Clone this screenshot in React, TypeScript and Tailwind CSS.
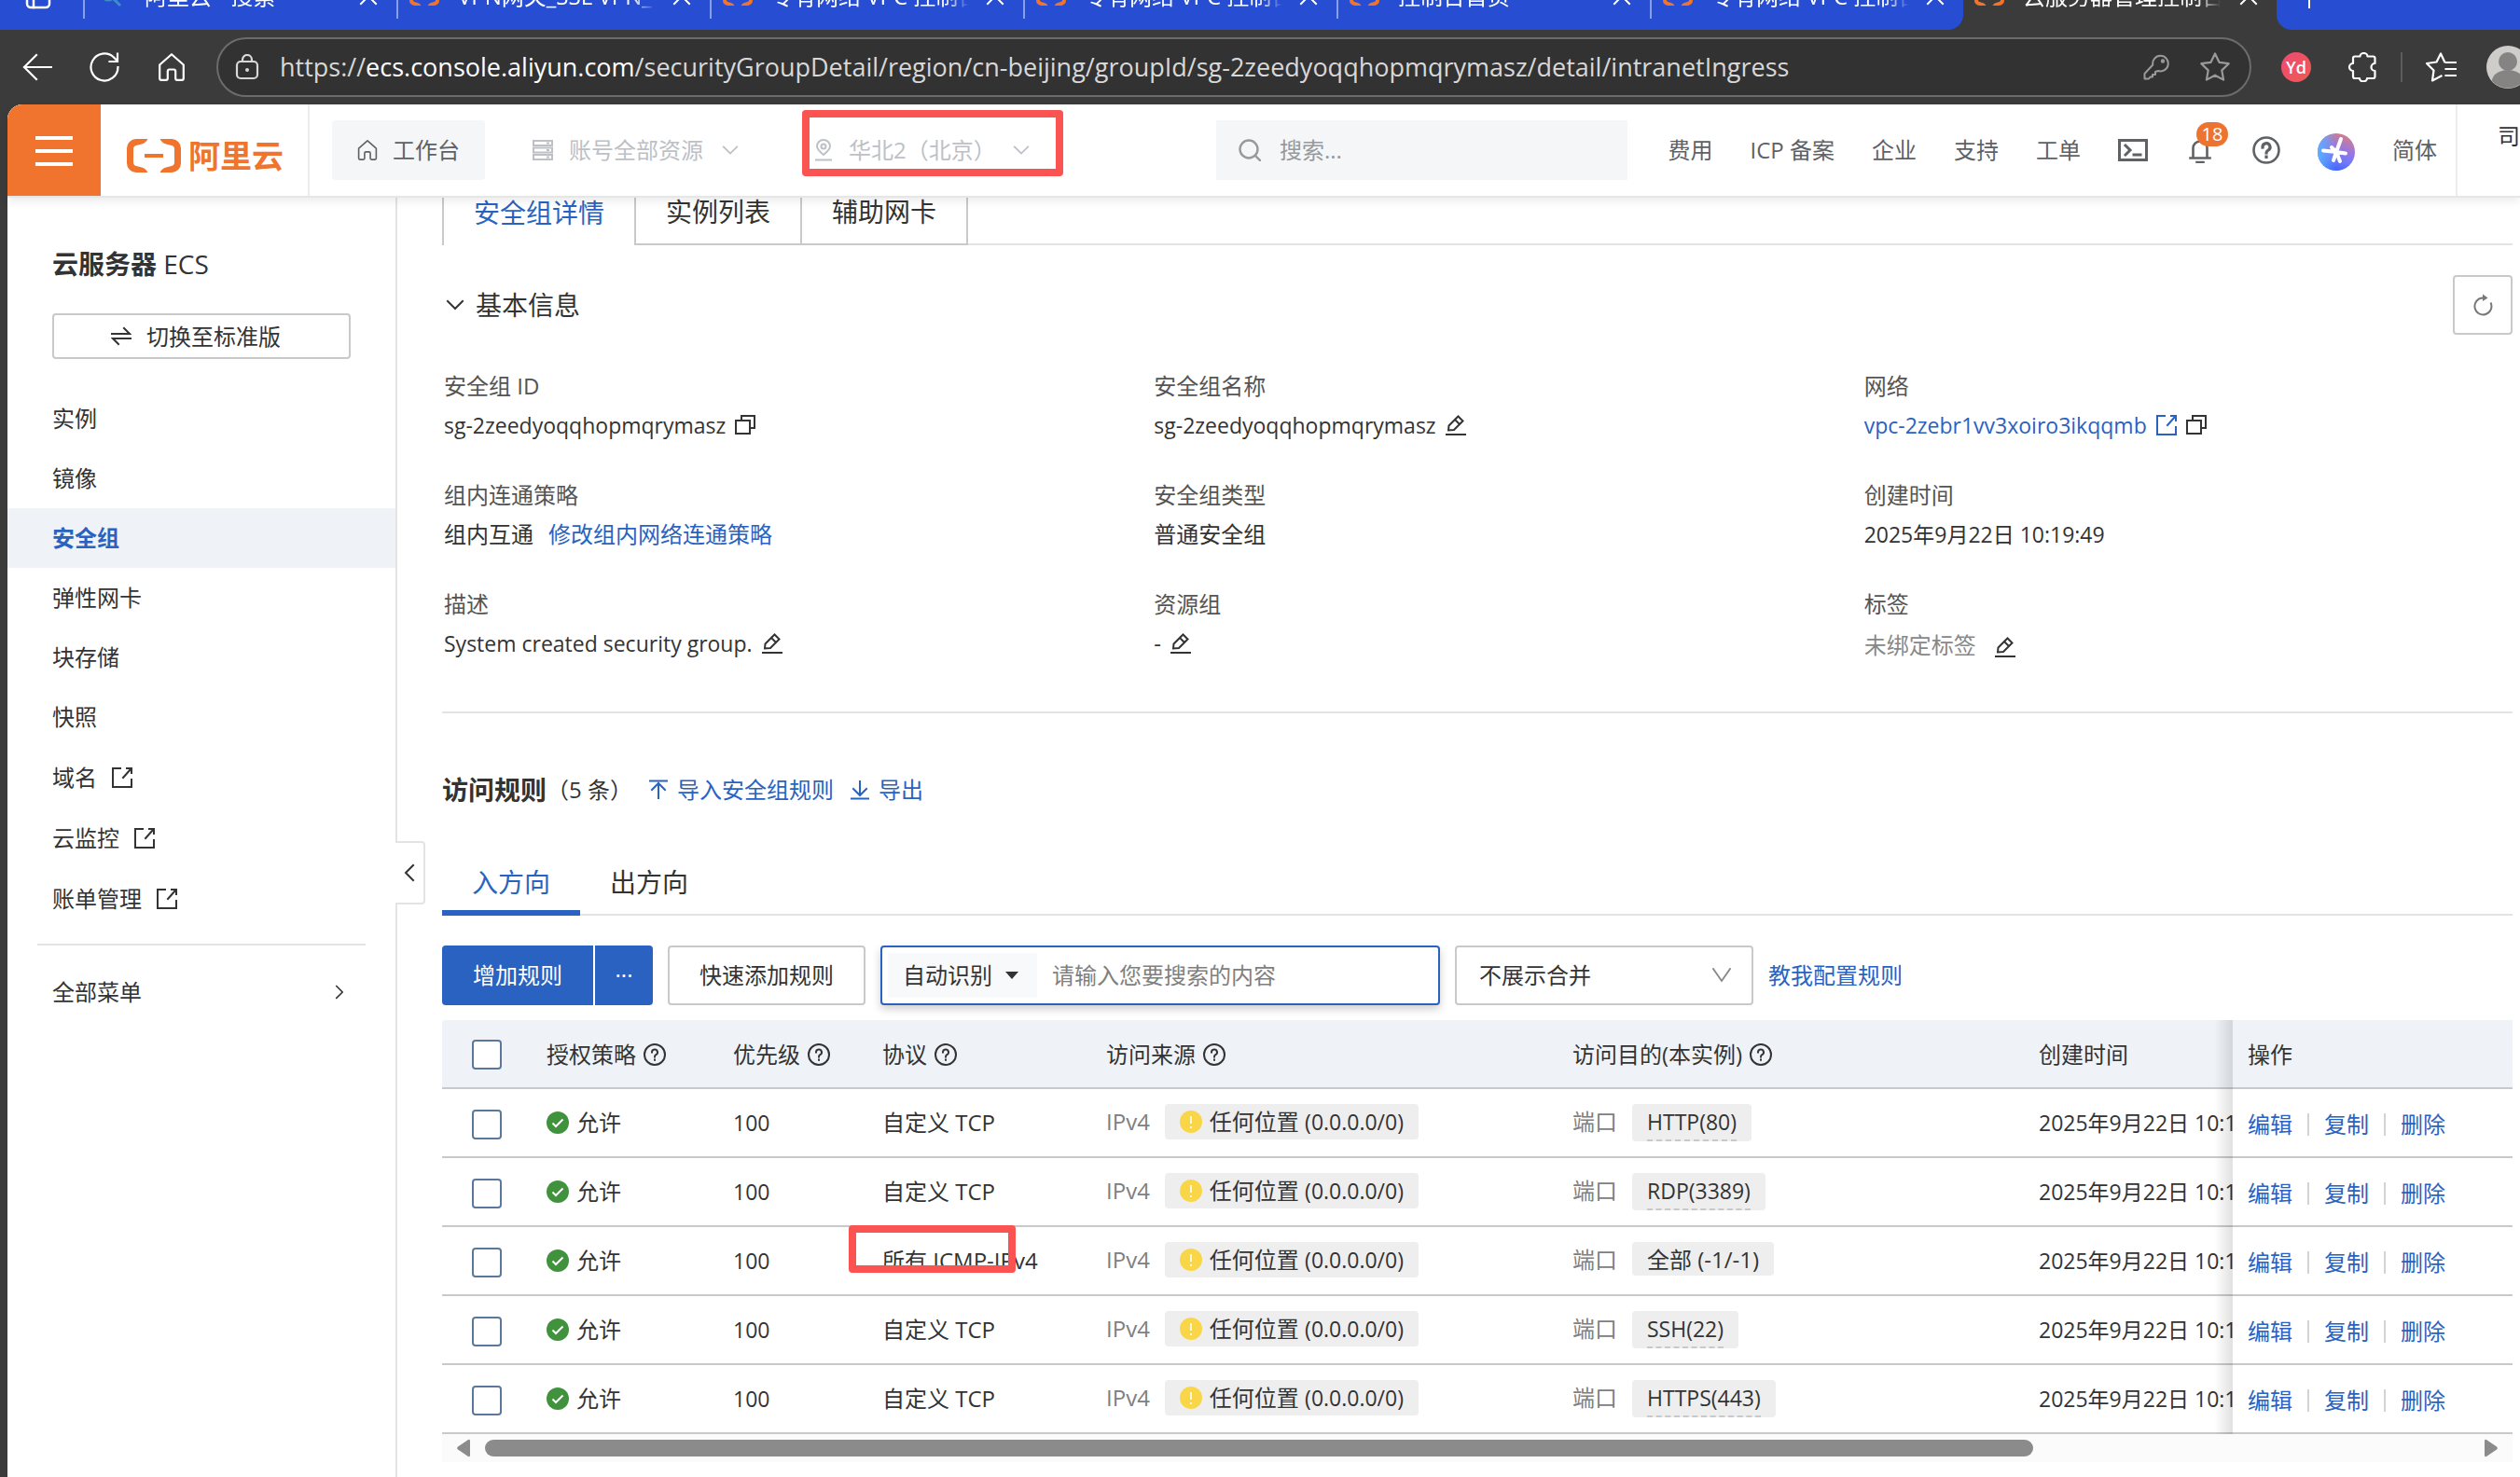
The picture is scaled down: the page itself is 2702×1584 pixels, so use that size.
import React from "react";

type IconProps = { className?: string };

const stroke = {
  fill: "none",
  stroke: "currentColor",
  strokeLinecap: "square" as const,
  strokeLinejoin: "miter" as const,
};

function Chevron({ className = "" }: IconProps) {
  return (
    <svg className={className} viewBox="0 0 20 12" {...stroke} strokeWidth={2}>
      <path d="M2 2l8 8 8-8" />
    </svg>
  );
}

function CopyIcon() {
  return (
    <svg className="size-[22px] shrink-0" viewBox="0 0 22 22" {...stroke} strokeWidth={2}>
      <path d="M1 6h15v14H1zM7 5V1h14v13h-4" />
    </svg>
  );
}

function EditIcon() {
  return (
    <svg className="size-[22px] shrink-0" viewBox="0 0 22 22" {...stroke} strokeWidth={2}>
      <path d="M1 21h20M3 16.500l.5-5L13.500 1.500l5 5-9.500 9.500zM10 5l5 5" />
    </svg>
  );
}

function ExternalIcon() {
  return (
    <svg className="size-[22px] shrink-0" viewBox="0 0 22 22" {...stroke} strokeWidth={2}>
      <path d="M9 1H1v20h20v-8M16 1h5v5M20 2l-8 9" />
    </svg>
  );
}

function HelpIcon({ className = "size-6" }: IconProps) {
  return (
    <svg className={className} viewBox="0 0 24 24" {...stroke} strokeWidth={2}>
      <circle cx="12" cy="12" r="11" />
      <path d="M9 9.500a3 3 0 1 1 4.300 2.700c-.9.500-1.300 1-1.300 2.300M12 17.600v.1" />
    </svg>
  );
}

function HomeIcon({ className = "" }: IconProps) {
  return (
    <svg className={className} viewBox="0 0 28 30" {...stroke} strokeWidth={2.2} strokeLinejoin="round">
      <path d="M1.200 12.500L14 1.200l12.800 11.300V27a1.800 1.800 0 0 1-1.800 1.800h-5a1.800 1.800 0 0 1-1.800-1.800v-7.500a2 2 0 0 0-2-2h-4.400a2 2 0 0 0-2 2V27A1.800 1.800 0 0 1 8 28.800H3A1.800 1.800 0 0 1 1.200 27z" />
    </svg>
  );
}

function AliyunMark({ className = "" }: IconProps) {
  return (
    <svg className={className} viewBox="0 0 58 36" fill="#f0742d">
      <path d="M22 0H10A10 10 0 0 0 0 10v16a10 10 0 0 0 10 10h12.500c-1.500-3-3.500-4.500-6.500-5.500l-6-1.500a4 4 0 0 1-3-4v-14a4 4 0 0 1 3-4l6-1.500c3-1 5-2.500 6.500-5.500zM36 0h12a10 10 0 0 1 10 10v16a10 10 0 0 1-10 10H35.500c1.500-3 3.500-4.500 6.500-5.500l6-1.500a4 4 0 0 0 3-4v-14a4 4 0 0 0-3-4l-6-1.500c-3-1-5-2.500-6.500-5.500z" />
      <path d="M19 16h20v4H19z" />
    </svg>
  );
}

function CloseIcon() {
  return (
    <svg className="size-5 shrink-0" viewBox="0 0 20 20" {...stroke} strokeWidth={2}>
      <path d="M2 2l16 16M18 2L2 18" />
    </svg>
  );
}

const browserTabs = [
  { title: "阿里云 - 搜索", search: true },
  { title: "VPN网关_SSL VPN_专有网络" },
  { title: "专有网络 VPC 控制台" },
  { title: "专有网络 VPC 控制台" },
  { title: "控制台首页" },
  { title: "专有网络 VPC 控制台" },
  { title: "云服务器管理控制台", active: true },
];

function BrowserTabs() {
  return (
    <div className="flex h-8 items-end overflow-hidden bg-[#3b3b3b] text-2xl text-white">
      <div className="flex h-[72px] w-[89px] shrink-0 items-center justify-center bg-[#264dd2] pr-2">
        <svg className="size-7" viewBox="0 0 28 28" {...stroke} strokeWidth={2.5}>
          <rect x="2" y="2" width="24" height="24" rx="4" />
          <path d="M9 8v18M2 9h24" />
        </svg>
      </div>
      {browserTabs.map((tab, i) => (
        <div
          key={i}
          className={`flex h-[72px] w-[336px] shrink-0 items-center pr-5 ${
            tab.active
              ? "bg-[#3b3b3b]"
              : i === 5
                ? "rounded-br-2xl bg-[#264dd2]"
                : "bg-[#264dd2]"
          }`}
        >
          {!tab.active && <span className="-mt-1 h-[52px] w-0.5 shrink-0 bg-[#8ba0e8]" />}
          <span className="ml-3 flex w-8 shrink-0 justify-center">
            {tab.search ? (
              <svg className="size-6" viewBox="0 0 24 24" fill="none" stroke="#3c8fc4" strokeWidth={3}>
                <circle cx="9" cy="9" r="7" />
                <path d="M14 14l8 8" />
              </svg>
            ) : (
              <AliyunMark className="h-5 w-8" />
            )}
          </span>
          <span className="ml-5 w-[212px] shrink-0 overflow-hidden whitespace-nowrap [mask-image:linear-gradient(to_right,black_88%,transparent)]">
            {tab.title}
          </span>
          <button aria-label="关闭标签页" className="ml-auto">
            <CloseIcon />
          </button>
        </div>
      ))}
      <div className="flex h-[72px] grow items-center rounded-bl-2xl bg-[#264dd2] pl-[22px]">
        <button aria-label="新建标签页">
          <svg className="size-[26px]" viewBox="0 0 26 26" {...stroke} strokeWidth={2}>
            <path d="M13 1v24M1 13h24" />
          </svg>
        </button>
      </div>
    </div>
  );
}

function BrowserToolbar() {
  return (
    <div className="flex h-20 items-center overflow-hidden bg-[#3b3b3b] pl-6 text-white">
      <button aria-label="后退">
        <svg className="size-8" viewBox="0 0 32 32" {...stroke} strokeWidth={2.2}>
          <path d="M2 16h29M15 3L2 16l13 13" />
        </svg>
      </button>
      <button aria-label="刷新" className="ml-10">
        <svg className="size-8" viewBox="0 0 32 32" {...stroke} strokeWidth={2.2}>
          <path d="M30.500 16A14.500 14.500 0 1 1 26 5.500l3 3M30 1.500V10h-8.500" />
        </svg>
      </button>
      <button aria-label="主页" className="ml-[42px]">
        <HomeIcon className="h-[30px] w-7" />
      </button>
      <div className="ml-[34px] flex h-16 min-w-0 grow items-center rounded-full border-2 border-[#6c6c6c] bg-[#323232] pl-[18px] pr-5 text-[#d8d8d8]">
        <svg className="h-7 w-[26px] shrink-0" viewBox="0 0 26 28" {...stroke} strokeWidth={2.2}>
          <rect x="2" y="8" width="22" height="18" rx="4" />
          <path d="M8 8V6a5 5 0 0 1 10 0v2" />
          <circle cx="13" cy="17" r="2" fill="currentColor" stroke="none" />
        </svg>
        <div className="ml-[22px] grow overflow-hidden whitespace-nowrap text-[27px] leading-10">
          https://<span className="text-white">ecs.console.aliyun.com</span>
          /securityGroupDetail/region/cn-beijing/groupId/sg-2zeedyoqqhopmqrymasz/detail/intranetIngress
        </div>
        <svg className="size-7 shrink-0 text-[#9a9a9a]" viewBox="0 0 28 28" {...stroke} strokeWidth={2}>
          <path d="M10.300 11.500A8.300 8.300 0 1 1 16 18l-3 1v3h-3v2.500H7.500L6 26.500H1.500V21z" strokeLinejoin="round" />
          <circle cx="21" cy="7.500" r="1.200" />
        </svg>
        <svg className="ml-8 size-[34px] shrink-0 text-[#9a9a9a]" viewBox="0 0 34 34" {...stroke} strokeWidth={2.200}>
          <path d="M17 2.500l4.500 9.300 10.200 1.400-7.400 7.200 1.800 10.200L17 25.700 7.900 30.600l1.800-10.200-7.400-7.200 10.200-1.400z" strokeLinejoin="round" />
        </svg>
      </div>
      <span className="ml-8 flex size-8 shrink-0 items-center justify-center rounded-full bg-gradient-to-br from-[#ee4a72] to-[#ee5a50] text-lg font-semibold">
        Yd
      </span>
      <svg className="ml-10 size-8 shrink-0" viewBox="0 0 32 32" {...stroke} strokeWidth={2.200} strokeLinejoin="round">
        <path d="M12.500 4.500a4 3.500 0 0 1 8 0h6a2 2 0 0 1 2 2V12a4 4 0 0 0 0 8v6a2 2 0 0 1-2 2H20a4 3.300 0 0 1-8 0H7a2 2 0 0 1-2-2v-6a4 4 0 0 1 0-8V6.500a2 2 0 0 1 2-2z" />
      </svg>
      <span className="ml-6 h-8 w-0.5 shrink-0 bg-[#5c5c5c]" />
      <svg className="ml-6 size-[34px] shrink-0" viewBox="0 0 34 34" {...stroke} strokeWidth={2.200} strokeLinejoin="round">
        <path d="M21 11L17 2.500 12.500 11.500 2 13l7.500 7.500L8 31.500l9.500-5M22.500 12h10.500M22.500 19h10.500M22.500 26h10.500" />
      </svg>
      <svg className="-mr-[10px] ml-8 size-[46px] shrink-0" viewBox="0 0 46 46">
        <circle cx="23" cy="23" r="23" fill="#cfcdca" />
        <circle cx="23" cy="17" r="10" fill="#858482" />
        <path d="M6 38a17 12 0 0 1 34 0 23 23 0 0 1-34 0z" fill="#858482" />
      </svg>
    </div>
  );
}

function ConsoleHeader() {
  return (
    <header className="relative z-10 flex h-[100px] shrink-0 items-stretch overflow-hidden rounded-tl-2xl border-b-2 border-[#e6e6e6] bg-white text-2xl text-[#5f6165] shadow-[0_4px_10px_rgba(0,0,0,0.08)]">
      <button aria-label="菜单" className="-mb-0.5 flex w-[100px] shrink-0 flex-col items-center justify-center gap-2.5 bg-[#f0742d]">
        <span className="h-1 w-10 bg-white" />
        <span className="h-1 w-10 bg-white" />
        <span className="h-1 w-10 bg-white" />
      </button>
      <a href="#home" className="flex w-56 shrink-0 items-center border-r-2 border-[#ececec] pl-7 pt-3">
        <AliyunMark className="h-9 w-[58px]" />
        <span className="ml-2 text-[34px] leading-10 font-bold text-[#f0742d]">阿里云</span>
      </a>
      <div className="flex min-w-0 grow items-center">
        <button className="ml-6 flex h-16 w-[164px] shrink-0 items-center justify-center gap-4 rounded bg-[#f4f6f8]">
          <HomeIcon className="size-[22px]" />
          工作台
        </button>
        <button className="ml-[50px] flex shrink-0 items-center text-[#bdc0c5]">
          <svg className="size-6" viewBox="0 0 24 24" {...stroke} strokeWidth={2}>
            <path d="M2 2h20v5H2zM2 9.500h20v5H2zM2 17h20v5H2zM17 4.500h1M17 12h1M17 19.500h1" />
          </svg>
          <span className="ml-4">账号全部资源</span>
          <Chevron className="ml-5 h-3 w-[18px]" />
        </button>
        <div className="relative ml-20 w-[232px] shrink-0">
          <button className="flex w-full items-center text-[#bdc0c5]">
            <svg className="size-6" viewBox="0 0 24 24" {...stroke} strokeWidth={2}>
              <path d="M11 17c-5-4-7-6-7-9a7 7 0 0 1 14 0c0 3-2 5-7 9zM3 22.500h16" />
              <circle cx="11" cy="8" r="2.500" />
            </svg>
            <span className="ml-3.5">华北2（北京）</span>
            <Chevron className="ml-auto h-3 w-[18px]" />
          </button>
          <span className="pointer-events-none absolute -top-[27px] -left-[12px] h-[71px] w-[280px] rounded border-8 border-[#fb5252]" />
        </div>
        <label className="ml-[200px] flex h-16 min-w-0 grow items-center bg-[#f4f6f8] px-6 text-[#97999d]">
          <svg className="size-6 shrink-0" viewBox="0 0 24 24" {...stroke} strokeWidth={2.400}>
            <circle cx="11" cy="11" r="9.500" />
            <path d="M18 18l5 5" />
          </svg>
          <input type="text" aria-label="搜索" placeholder="搜索..." className="ml-5 min-w-0 grow bg-transparent outline-none placeholder:text-[#97999d]" />
        </label>
        <nav className="ml-11 flex shrink-0 items-center gap-10">
          <a href="#cost">费用</a>
          <a href="#icp">ICP 备案</a>
          <a href="#enterprise">企业</a>
          <a href="#support">支持</a>
          <a href="#ticket">工单</a>
        </nav>
        <svg className="ml-10 h-6 w-8 shrink-0" viewBox="0 0 32 24" {...stroke} strokeWidth={3}>
          <path d="M1.500 1.500h29v21h-29zM8 7l5 5-5 5M17 17h7" />
        </svg>
        <div className="relative ml-11 shrink-0">
          <svg className="h-7 w-6" viewBox="0 0 24 28" {...stroke} strokeWidth={2.600}>
            <path d="M1.500 22.500h21M4.500 22V12a7.500 7.500 0 0 1 15 0v10M12 1.500v2M8.500 27h7" />
          </svg>
          <span className="absolute -top-4 left-2 flex h-[26px] w-[34px] items-center justify-center rounded-full bg-[#ed7430] text-xl leading-none text-white">
            18
          </span>
        </div>
        <svg className="ml-11 size-[30px] shrink-0" viewBox="0 0 30 30" {...stroke} strokeWidth={2.600}>
          <circle cx="15" cy="15" r="13.500" />
          <path d="M11 12a4 4 0 1 1 6 3.200c-1.300.8-2 1.400-2 2.800M15 22v.5" strokeWidth={3.200} />
        </svg>
        <svg className="mt-1 ml-10 size-10 shrink-0" viewBox="0 0 40 40">
          <defs>
            <linearGradient id="spark" x1="0.8" y1="0" x2="0.4" y2="1">
              <stop offset="0" stopColor="#d9807c" />
              <stop offset="0.4" stopColor="#9d76dc" />
              <stop offset="0.7" stopColor="#6f78fa" />
              <stop offset="1" stopColor="#3a62fb" />
            </linearGradient>
            <linearGradient id="sparkEdge" x1="0" y1="0.5" x2="0.5" y2="0.5">
              <stop offset="0" stopColor="#5eb0ff" />
              <stop offset="1" stopColor="#5eb0ff" stopOpacity="0" />
            </linearGradient>
          </defs>
          <circle cx="20" cy="20" r="20" fill="url(#spark)" />
          <circle cx="20" cy="20" r="20" fill="url(#sparkEdge)" />
          <path d="M20 20l5-14M20 20l-5-5M20 20l-14-1.500M20 20l10 1.500M20 20l-3 9M20 20l4 10" stroke="#fff" strokeWidth="4" strokeLinecap="round" />
        </svg>
        <button className="mx-5 ml-10 shrink-0">简体</button>
      </div>
      <div className="w-[69px] shrink-0 overflow-hidden border-l-2 border-[#ececec] pt-[18px] pl-[43px] whitespace-nowrap text-[#333]">
        司
      </div>
    </header>
  );
}

const menu = ["实例", "镜像", "安全组", "弹性网卡", "块存储", "快照"];
const externalMenu = ["域名", "云监控", "账单管理"];

function Sidebar() {
  return (
    <aside className="relative w-[418px] shrink-0 border-r-2 border-[#e3e3e3] text-2xl text-[#333]">
      <h1 className="mt-[51px] pl-12 text-[28px] leading-10 font-bold">
        云服务器 <span className="font-normal">ECS</span>
      </h1>
      <button className="mx-12 mt-[33px] flex h-[49px] w-80 items-center justify-center gap-4 rounded border-2 border-[#c8c9cb] pr-3">
        <svg className="h-6 w-[22px]" viewBox="0 0 22 24" {...stroke} strokeWidth={2}>
          <path d="M1 9h19l-6-6M21 14H2l6 6" />
        </svg>
        切换至标准版
      </button>
      <nav className="mt-8 flex flex-col">
        {menu.map((m) => (
          <a
            key={m}
            href="#menu"
            className={`flex h-16 items-center pl-12 ${m === "安全组" ? "bg-[#eff3f8] font-bold text-[#2962c1]" : ""}`}
          >
            {m}
          </a>
        ))}
        {externalMenu.map((m) => (
          <a key={m} href="#external" className="flex h-[65px] items-center gap-4 pl-12">
            {m}
            <ExternalIcon />
          </a>
        ))}
      </nav>
      <hr className="mx-8 mt-4 border-t-2 border-[#e3e3e3]" />
      <button className="mt-[18px] flex h-16 w-full items-center justify-between pr-[52px] pl-12">
        全部菜单
        <Chevron className="h-2.5 w-4 -rotate-90" />
      </button>
      <button
        aria-label="收起导航"
        className="absolute top-[690px] -right-8 flex h-[68px] w-8 items-center justify-center rounded-r border-2 border-l-0 border-[#e3e3e3] bg-white"
      >
        <Chevron className="h-3 w-5 rotate-90" />
      </button>
    </aside>
  );
}

function Field({ label, children }: { label: string; children: React.ReactNode }) {
  return (
    <div className="leading-[42px]">
      <dt className="text-[#555]">{label}</dt>
      <dd className="flex h-[42px] items-center gap-2.5">{children}</dd>
    </div>
  );
}

function BasicInfo() {
  return (
    <section>
      <div className="mt-8 flex h-16 items-center justify-between">
        <h2 className="flex items-center gap-3 pl-1 text-[28px] leading-10">
          <Chevron className="h-3 w-5" />
          基本信息
        </h2>
        <button aria-label="刷新" className="flex size-16 items-center justify-center rounded border-2 border-[#c8c9cb] text-[#777]">
          <svg className="size-6" viewBox="0 0 24 24" {...stroke} strokeWidth={2} strokeLinecap="butt">
            <path d="M20.500 9.500A9 9 0 1 1 12 4.500" />
            <path d="M12 0.500l5.500 4-5.500 3.500z" fill="currentColor" stroke="none" />
          </svg>
        </button>
      </div>
      <dl className="mt-[34px] grid grid-cols-3 gap-x-[66px] gap-y-[33px] pl-0.5">
        <Field label="安全组 ID">
          <span className="text-[23px]">sg-2zeedyoqqhopmqrymasz</span>
          <CopyIcon />
        </Field>
        <Field label="安全组名称">
          <span className="text-[23px]">sg-2zeedyoqqhopmqrymasz</span>
          <EditIcon />
        </Field>
        <Field label="网络">
          <a href="#vpc" className="flex items-center gap-2.5 text-[23px] text-[#2962c1]">
            vpc-2zebr1vv3xoiro3ikqqmb
            <ExternalIcon />
          </a>
          <CopyIcon />
        </Field>
        <Field label="组内连通策略">
          组内互通
          <a href="#policy" className="ml-1.5 text-[#2962c1]">
            修改组内网络连通策略
          </a>
        </Field>
        <Field label="安全组类型">普通安全组</Field>
        <Field label="创建时间">
          <span className="text-[23px]">2025年9月22日 10:19:49</span>
        </Field>
        <Field label="描述">
          <span className="text-[23px]">System created security group.</span>
          <EditIcon />
        </Field>
        <Field label="资源组">
          -
          <EditIcon />
        </Field>
        <Field label="标签">
          <span className="mr-2.5 pt-1 text-[#888]">未绑定标签</span>
          <span className="pt-2">
            <EditIcon />
          </span>
        </Field>
      </dl>
    </section>
  );
}

const rules = [
  { id: 1, protocol: "自定义 TCP", port: "HTTP(80)" },
  { id: 2, protocol: "自定义 TCP", port: "RDP(3389)" },
  { id: 3, protocol: "所有 ICMP-IPv4", port: "全部 (-1/-1)", marked: true },
  { id: 4, protocol: "自定义 TCP", port: "SSH(22)" },
  { id: 5, protocol: "自定义 TCP", port: "HTTPS(443)" },
];

const columns = [
  { name: "授权策略", help: true, width: "w-[200px]" },
  { name: "优先级", help: true, width: "w-[160px]" },
  { name: "协议", help: true, width: "w-[240px]" },
  { name: "访问来源", help: true, width: "" },
  { name: "访问目的(本实例)", help: true, width: "" },
  { name: "创建时间", help: false, width: "w-[224px]" },
];

const box =
  "block size-8 appearance-none rounded border-2 border-[#5b789c] bg-white checked:bg-[#2962c1]";
const pinned =
  "relative before:absolute before:top-0 before:-bottom-0.5 before:-left-5 before:w-5 before:bg-gradient-to-l before:from-black/12 before:to-transparent";

function RulesTable() {
  return (
    <table className="mt-4 w-full table-fixed border-separate border-spacing-0 text-left leading-[38px]">
      <thead className="bg-[#eff3f8]">
        <tr className="h-[74px] *:border-b-2 *:border-[#c8c9cb] *:pt-0.5">
          <th className="w-24 rounded-tl pl-8">
            <input type="checkbox" aria-label="全选" className={box} />
          </th>
          {columns.map((c) => (
            <th key={c.name} className={`pl-4 font-normal whitespace-nowrap ${c.width}`}>
              <span className="flex items-center gap-2">
                {c.name}
                {c.help && <HelpIcon />}
              </span>
            </th>
          ))}
          <th className={`w-[300px] bg-[#eff3f8] pl-4 font-normal ${pinned}`}>操作</th>
        </tr>
      </thead>
      <tbody>
        {rules.map((r) => (
          <tr key={r.id} className="h-[74px] *:border-b-2 *:border-[#c8c9cb]">
            <td className="pt-1 pl-8">
              <input type="checkbox" aria-label={`选择规则 ${r.port}`} className={box} />
            </td>
            <td className="pl-4">
              <span className="flex items-center gap-2">
                <svg className="size-6" viewBox="0 0 24 24">
                  <circle cx="12" cy="12" r="12" fill="#40933c" />
                  <path d="M6.500 12.500l3.500 3.500 7.500-7.500" fill="none" stroke="#fff" strokeWidth="2" />
                </svg>
                允许
              </span>
            </td>
            <td className="pl-4 text-[23px]">100</td>
            <td className="relative pl-4 whitespace-nowrap">
              {r.protocol}
              {r.marked && (
                <span className="pointer-events-none absolute -top-0.5 -left-5 h-[51px] w-[179px] rounded border-8 border-[#fb5252]" />
              )}
            </td>
            <td className="pl-4">
              <div className="flex h-10 items-start whitespace-nowrap">
                <span className="text-[#808080]">IPv4</span>
                <span className="ml-4 flex h-[38px] items-center gap-2 rounded bg-[#eee] px-4">
                  <svg className="size-6" viewBox="0 0 24 24">
                    <circle cx="12" cy="12" r="12" fill="#f9d648" />
                    <path d="M12 6v8M12 17v2" stroke="#fff" strokeWidth="1.600" />
                  </svg>
                  <span>
                    任何位置 <span className="text-[23px]">(0.0.0.0/0)</span>
                  </span>
                </span>
              </div>
            </td>
            <td className="pl-4">
              <div className="flex h-10 items-start whitespace-nowrap">
                <span className="text-[#808080]">端口</span>
                <span className="ml-4 rounded bg-[#eee] px-4">
                  <span
                    className={
                      r.marked ? "block h-9" : "block h-10 border-b-2 border-dashed border-[#c8c9cb] text-[23px]"
                    }
                  >
                    {r.port}
                  </span>
                </span>
              </div>
            </td>
            <td className="overflow-hidden pl-4 text-[23px] whitespace-nowrap">2025年9月22日 10:19:49</td>
            <td className={`bg-white pt-1 pl-4 text-[#2962c1] ${pinned}`}>
              <div className="flex items-center gap-4">
                <a href="#edit">编辑</a>
                <span className="h-6 w-0.5 bg-[#d3d3d3]" />
                <a href="#copy">复制</a>
                <span className="h-6 w-0.5 bg-[#d3d3d3]" />
                <a href="#delete">删除</a>
              </div>
            </td>
          </tr>
        ))}
      </tbody>
    </table>
  );
}

function AccessRules() {
  return (
    <section>
      <div className="mt-[62px] flex h-10 items-center">
        <h2 className="text-[28px] leading-10 font-bold">访问规则</h2>
        <span>（5 条）</span>
        <a href="#import" className="ml-4 flex items-center gap-2 text-[#2962c1]">
          <svg className="size-6" viewBox="0 0 24 24" {...stroke} strokeWidth={2}>
            <path d="M3 2.500h18M12 21V5M5 12l7-7 7 7" />
          </svg>
          导入安全组规则
        </a>
        <a href="#export" className="ml-4 flex items-center gap-2 text-[#2962c1]">
          <svg className="size-6" viewBox="0 0 24 24" {...stroke} strokeWidth={2}>
            <path d="M3 21.500h18M12 3v14M5 11l7 7 7-7" />
          </svg>
          导出
        </a>
      </div>
      <div role="tablist" className="mt-[47px] flex h-[68px] border-b-2 border-[#e3e3e3] text-[28px]">
        <button role="tab" aria-selected="true" className="-mb-0.5 w-[148px] border-b-[6px] border-[#2962c1] pt-1 text-[#2962c1]">
          入方向
        </button>
        <button role="tab" aria-selected="false" className="w-[148px]">
          出方向
        </button>
      </div>
      <div className="mt-8 flex h-16 items-stretch">
        <button className="w-[162px] rounded-l bg-[#2962c1] text-white">增加规则</button>
        <button aria-label="更多操作" className="ml-0.5 w-[62px] rounded-r bg-[#2962c1] text-white">
          ···
        </button>
        <button className="ml-4 w-[212px] rounded border-2 border-[#c8c9cb]">快速添加规则</button>
        <div className="ml-4 flex w-[600px] items-center rounded border-2 border-[#2962c1] bg-white pl-1.5 shadow-[0_4px_10px_rgba(0,0,0,0.2)]">
          <div className="relative h-12 w-40 shrink-0 bg-[#f7f9fb]">
            <select aria-label="搜索字段" className="h-full w-full appearance-none bg-transparent pl-4 outline-none">
              <option>自动识别</option>
            </select>
            <svg className="pointer-events-none absolute top-5 right-5 h-2 w-3.5" viewBox="0 0 14 8">
              <path d="M0 0h14L7 8z" fill="#333" />
            </svg>
          </div>
          <input
            type="text"
            aria-label="搜索规则"
            placeholder="请输入您要搜索的内容"
            className="ml-4 min-w-0 grow bg-transparent outline-none placeholder:text-[#808080]"
          />
        </div>
        <div className="relative ml-4 w-80">
          <select
            aria-label="合并展示"
            className="h-full w-full appearance-none rounded border-2 border-[#c8c9cb] bg-white pl-6 outline-none"
          >
            <option>不展示合并</option>
          </select>
          <svg className="pointer-events-none absolute top-6 right-6 h-4 w-5 text-[#888]" viewBox="0 0 20 16" {...stroke} strokeWidth={1.800}>
            <path d="M1 1l9 13 9-13" />
          </svg>
        </div>
        <a href="#guide" className="ml-4 self-center text-[#2962c1]">
          教我配置规则
        </a>
      </div>
      <RulesTable />
      <div className="flex h-[30px] items-center justify-between bg-[#fbfbfb] px-4">
        <svg className="h-5 w-3.5 shrink-0" viewBox="0 0 14 20">
          <path d="M12 1a1.500 1.500 0 0 1 2 1v16a1.500 1.500 0 0 1-2 1L1 11.500a2 2 0 0 1 0-3z" fill="#8b8b8b" />
        </svg>
        <div className="mx-4 h-[18px] grow">
          <div className="h-full w-[78%] rounded-full bg-[#8b8b8b]" />
        </div>
        <svg className="h-5 w-3.5 shrink-0" viewBox="0 0 14 20">
          <path d="M2 1a1.500 1.500 0 0 0-2 1v16a1.500 1.500 0 0 0 2 1l11-7.500a2 2 0 0 0 0-3z" fill="#8b8b8b" />
        </svg>
      </div>
    </section>
  );
}

function DetailTabs() {
  return (
    <div role="tablist" className="flex h-[51px] items-end overflow-hidden text-[28px]">
      <button role="tab" aria-selected="true" className="h-[68px] w-[206px] border-l-2 border-[#c8c9cb] text-[#2962c1]">
        安全组详情
      </button>
      <button role="tab" aria-selected="false" className="h-[68px] w-[180px] border-x-2 border-b-2 border-[#c8c9cb]">
        实例列表
      </button>
      <button role="tab" aria-selected="false" className="h-[68px] w-[178px] border-r-2 border-b-2 border-[#c8c9cb]">
        辅助网卡
      </button>
      <span className="h-0.5 grow bg-[#e3e3e3]" />
    </div>
  );
}

export default function App() {
  return (
    <div className="flex min-h-screen flex-col overflow-hidden bg-[#3b3b3b] font-['Open_Sans','Noto_Sans_CJK_SC',sans-serif]">
      <BrowserTabs />
      <BrowserToolbar />
      <div className="ml-2 flex grow flex-col rounded-tl-2xl bg-white">
        <ConsoleHeader />
        <div className="flex grow">
          <Sidebar />
          <main className="min-w-0 grow pr-2 pl-12 text-2xl text-[#333]">
            <DetailTabs />
            <BasicInfo />
            <hr className="mt-[52px] border-t-2 border-[#e3e3e3]" />
            <AccessRules />
          </main>
        </div>
      </div>
    </div>
  );
}
